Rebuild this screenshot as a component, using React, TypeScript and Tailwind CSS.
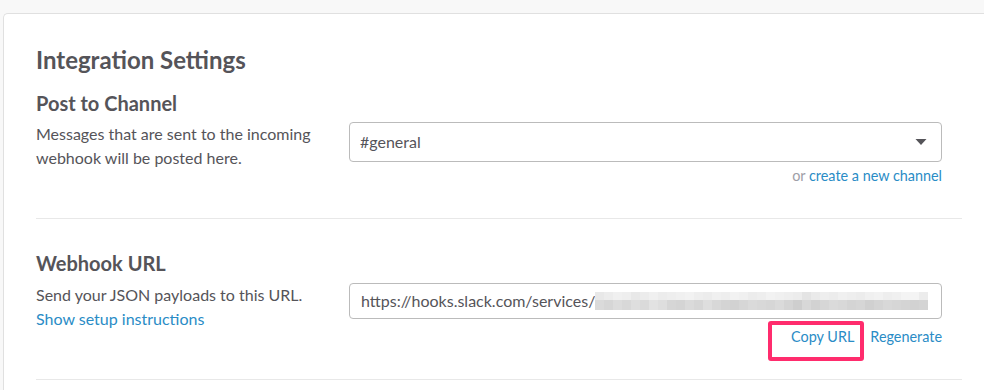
import React from "react";

const font = { fontFamily: "Lato, 'Noto Sans', sans-serif" };

// redacted token, drawn as a pixelated strip
const topRow = [232, 236, 240, 238, 232, 236, 240, 236, 238, 240, 242, 238, 236, 240, 238, 242, 240, 236, 238, 242, 240, 238, 236, 228, 234, 238, 236, 240, 238, 236, 240, 242, 238, 240, 244, 244, 236];
const bottomRow = [218, 214, 220, 216, 222, 218, 226, 222, 214, 212, 218, 214, 222, 216, 212, 210, 214, 218, 216, 214, 218, 212, 206, 216, 210, 214, 218, 216, 212, 214, 208, 212, 216, 214, 212, 210, 212];

function Redacted() {
    return (
        <svg width="336" height="18" className="shrink-0">
            {topRow.map((v, i) => (
                <rect key={`t${i}`} x={i * 9} y={0} width={9} height={8} fill={`rgb(${v},${v},${v})`} />
            ))}
            {bottomRow.map((v, i) => (
                <rect key={`b${i}`} x={i * 9} y={8} width={9} height={10} fill={`rgb(${v},${v},${v})`} />
            ))}
        </svg>
    );
}

function Caret() {
    return (
        <svg width="12" height="8" viewBox="0 0 12 8">
            <path d="M0.5 1h11L6 7z" fill="#555459" />
        </svg>
    );
}

export default function App() {
    return (
        <div className="w-[984px] h-[390px] overflow-hidden bg-[#f8f8f8] pt-[13px] pl-[3px]" style={font}>
            <div className="h-full bg-white border-l border-t border-[#e0e0e0] rounded-tl-[5px] pl-8 pr-[22px] pt-[31px] text-[#555459]">
                <h1 className="text-[24px] leading-[30px] font-bold">Integration Settings</h1>

                <h2 className="text-[20px] leading-[26px] font-bold mt-[15px]">Post to Channel</h2>
                <div className="flex mt-[6px]">
                    <p className="w-[313px] shrink-0 text-[16px] leading-[24px] pr-2">
                        Messages that are sent to the incoming webhook will be posted here.
                    </p>
                    <div className="w-[593px] shrink-0">
                        <div className="h-[40px] border border-[#bbbbbb] rounded-[4px] flex items-center justify-between pl-[10px] pr-[14px] text-[16px]">
                            <span>#general</span>
                            <Caret />
                        </div>
                        <div className="text-right text-[14.4px] leading-[20px] mt-[4px]">
                            <span className="text-[#9e9ea6]">or </span>
                            <span className="text-[#2a8cc6]">create a new channel</span>
                        </div>
                    </div>
                </div>

                <div className="border-t border-[#e8e8e8] mt-[32px]" />

                <h2 className="text-[20px] leading-[26px] font-bold mt-[31px]">Webhook URL</h2>
                <div className="flex mt-[7px]">
                    <div className="w-[313px] shrink-0 text-[16px] leading-[24px]">
                        <p>Send your JSON payloads to this URL.</p>
                        <p className="text-[#2a8cc6]">Show setup instructions</p>
                    </div>
                    <div className="w-[593px] shrink-0">
                        <div className="h-[36px] border border-[#bbbbbb] rounded-[4px] flex items-center pl-[11px] text-[16px] text-[#555459]">
                            <span>https://hooks.slack.com/services/</span>
                            <Redacted />
                        </div>
                        <div className="flex justify-end items-start text-[14.4px] leading-[20px] mt-[2px]">
                            <span className="border-[4px] border-[#ff2c6d] rounded-[3px] h-[40px] w-[96px] flex justify-end pt-[2px] pr-[6px] text-[#2a8cc6]">
                                Copy URL
                            </span>
                            <span className="text-[#2a8cc6] ml-[6px] mt-[6px]">Regenerate</span>
                        </div>
                    </div>
                </div>

                <div className="border-t border-[#e8e8e8] mt-[18px]" />
            </div>
        </div>
    );
}
